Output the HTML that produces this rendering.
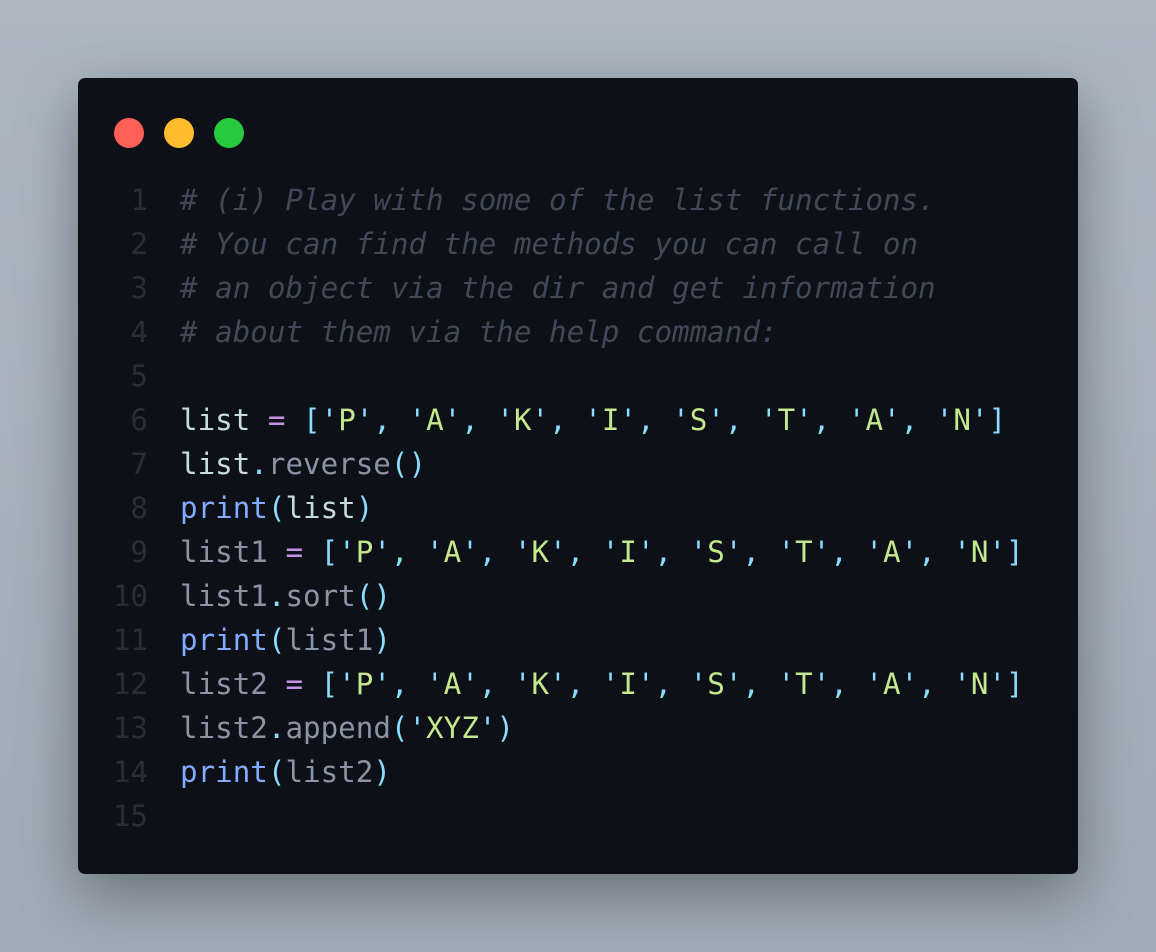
<!DOCTYPE html>
<html><head><style>
html,body{margin:0;padding:0;}
body{width:1156px;height:952px;background:linear-gradient(180deg,#acb7c2,#9fabb7);position:relative;overflow:hidden;}
.win{position:absolute;left:78px;top:78px;width:1000px;height:796px;background:#0d1017;border-radius:7px;box-shadow:0 20px 60px rgba(0,0,0,.35);}
.dot{position:absolute;top:40px;width:30px;height:30px;border-radius:50%;}
pre{position:absolute;left:0;top:100px;margin:0;font-family:"DejaVu Sans Mono","Liberation Mono",monospace;font-size:29.2px;line-height:44px;color:#c5dbe0;}
.ln{display:inline-block;width:70px;text-align:right;color:#282d38;margin-right:32px;}
.c{color:#414857;font-style:italic}
.p{color:#89ddff}.s{color:#c3e88d}.o{color:#c792ea}.m{color:#8b94a5}.f{color:#82aaff}
</style></head><body>
<div class="win">
<div class="dot" style="left:36px;background:#ff5f56"></div>
<div class="dot" style="left:86px;background:#ffbd2e"></div>
<div class="dot" style="left:136px;background:#27c93f"></div>
<pre><span class="ln">1</span><span class="c"># (i) Play with some of the list functions.</span>
<span class="ln">2</span><span class="c"># You can find the methods you can call on</span>
<span class="ln">3</span><span class="c"># an object via the dir and get information</span>
<span class="ln">4</span><span class="c"># about them via the help command:</span>
<span class="ln">5</span>
<span class="ln">6</span>list <span class="o">=</span> <span class="p">['</span><span class="s">P</span><span class="p">', '</span><span class="s">A</span><span class="p">', '</span><span class="s">K</span><span class="p">', '</span><span class="s">I</span><span class="p">', '</span><span class="s">S</span><span class="p">', '</span><span class="s">T</span><span class="p">', '</span><span class="s">A</span><span class="p">', '</span><span class="s">N</span><span class="p">']</span>
<span class="ln">7</span>list<span class="p">.</span><span class="m">reverse</span><span class="p">()</span>
<span class="ln">8</span><span class="f">print</span><span class="p">(</span>list<span class="p">)</span>
<span class="ln">9</span><span class="m">list1</span> <span class="o">=</span> <span class="p">['</span><span class="s">P</span><span class="p">', '</span><span class="s">A</span><span class="p">', '</span><span class="s">K</span><span class="p">', '</span><span class="s">I</span><span class="p">', '</span><span class="s">S</span><span class="p">', '</span><span class="s">T</span><span class="p">', '</span><span class="s">A</span><span class="p">', '</span><span class="s">N</span><span class="p">']</span>
<span class="ln">10</span><span class="m">list1</span><span class="p">.</span><span class="m">sort</span><span class="p">()</span>
<span class="ln">11</span><span class="f">print</span><span class="p">(</span><span class="m">list1</span><span class="p">)</span>
<span class="ln">12</span><span class="m">list2</span> <span class="o">=</span> <span class="p">['</span><span class="s">P</span><span class="p">', '</span><span class="s">A</span><span class="p">', '</span><span class="s">K</span><span class="p">', '</span><span class="s">I</span><span class="p">', '</span><span class="s">S</span><span class="p">', '</span><span class="s">T</span><span class="p">', '</span><span class="s">A</span><span class="p">', '</span><span class="s">N</span><span class="p">']</span>
<span class="ln">13</span><span class="m">list2</span><span class="p">.</span><span class="m">append</span><span class="p">('</span><span class="s">XYZ</span><span class="p">')</span>
<span class="ln">14</span><span class="f">print</span><span class="p">(</span><span class="m">list2</span><span class="p">)</span>
<span class="ln">15</span></pre>
</div>
</body></html>
